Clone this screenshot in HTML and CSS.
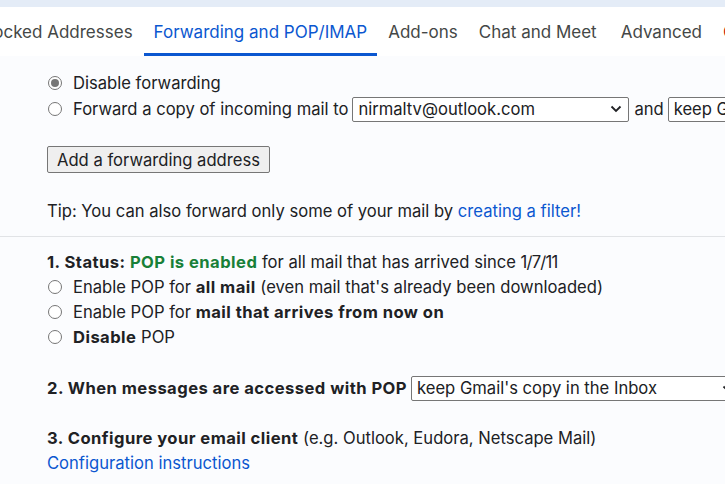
FILE: index.html
```html
<!DOCTYPE html>
<html>
<head>
<meta charset="utf-8">
<link rel="stylesheet" href="styles.css">
</head>
<body>
<div class="topstrip"></div>
<nav class="tabs">
  <span class="tab">Blocked Addresses</span>
  <span class="tab active">Forwarding and POP/IMAP</span>
  <span class="tab">Add-ons</span>
  <span class="tab">Chat and Meet</span>
  <span class="tab adv">Advanced</span>
  <span class="tab offline">Offline</span>
</nav>
<main class="content">
  <section class="forward">
    <label class="row"><span class="radio checked"></span>Disable forwarding</label>
    <label class="row"><span class="radio"></span>Forward a copy of incoming mail to
      <span class="select sel-addr">nirmaltv@outlook.com<svg class="chev" viewBox="0 0 12 8" width="12" height="8"><path d="M1.5 1.5 6 6l4.5-4.5" fill="none" stroke="#202124" stroke-width="1.8"/></svg></span>
      <span class="and">and</span>
      <span class="select sel-keep">keep Gmail's copy in the Inbox</span>
    </label>
    <div class="btnrow"><button class="btn">Add a forwarding address</button></div>
    <p class="tip">Tip: You can also forward only some of your mail by <a class="link">creating a filter!</a></p>
  </section>
  <hr class="sep">
  <section class="pop">
    <div class="line status"><b>1. Status: </b><b class="green">POP is enabled</b> for all mail that has arrived since <span class="date">1/7/11</span></div>
    <label class="row"><span class="radio"></span>Enable POP for&nbsp;<b>all mail</b>&nbsp;(even mail that's already been downloaded)</label>
    <label class="row"><span class="radio"></span>Enable POP for&nbsp;<b>mail that arrives from now on</b></label>
    <label class="row"><span class="radio"></span><b>Disable</b>&nbsp;POP</label>
    <div class="line q2"><b>2. When messages are accessed with POP</b>
      <span class="select sel-pop">keep Gmail's copy in the Inbox<svg class="chev" viewBox="0 0 12 8" width="12" height="8"><path d="M1.5 1.5 6 6l4.5-4.5" fill="none" stroke="#202124" stroke-width="1.8"/></svg></span>
    </div>
    <div class="line q3"><b>3. Configure your email client</b> (e.g. Outlook, Eudora, Netscape Mail)</div>
    <div class="line"><a class="link">Configuration instructions</a></div>
  </section>
</main>
</body>
</html>
```
FILE: styles.css
```css
html, body {
  margin: 0;
  padding: 0;
  overflow: hidden;
  width: 725px;
  height: 484px;
  background: #fbfcfe;
  font-family: Inter, Roboto, "Noto Sans", sans-serif;
  color: #202124;
}
.topstrip {
  height: 7px;
  background: #e4ecf7;
}
.tabs {
  display: flex;
  height: 49px;
  background: #ffffff;
  white-space: nowrap;
  margin-left: -32px;
  font-size: 17px;
  overflow: hidden;
}
.tab {
  padding: 0 10px;
  margin-right: 1px;
  display: flex;
  align-items: center;
  color: #444746;
  border-bottom: 3px solid transparent;
  padding-top: 3px;
}
.tab.adv { padding-left: 13px; }
.tab.active {
  color: #0b57d0;
  border-bottom-color: #0b57d0;
}
.tab.offline { color: #c5221f; }
.content {
  padding-left: 47px;
  font-size: 16.6px;
}
b { letter-spacing: 0.45px; }
.date { letter-spacing: -0.8px; }
.forward { padding-top: 14px; }
.row {
  display: flex;
  align-items: center;
  height: 25px;
  white-space: nowrap;
}
.forward .row { height: 26px; }
.radio {
  width: 14px;
  height: 14px;
  border: 1px solid #767676;
  border-radius: 50%;
  background: #fff;
  margin: 0 11px 0 1px;
  box-sizing: border-box;
  position: relative;
  flex: none;
}
.radio.checked::after {
  content: "";
  position: absolute;
  left: 2px; top: 2px;
  width: 8px; height: 8px;
  border-radius: 50%;
  background: #767676;
}
.select {
  display: inline-flex;
  align-items: center;
  height: 25px;
  box-sizing: border-box;
  border: 1px solid #767676;
  border-radius: 2px;
  background: #fff;
  padding: 0 6px 0 5px;
  margin-left: 4px;
  flex: none;
}
.sel-addr { width: 277px; justify-content: space-between; }
.sel-keep { width: 250px; }
.sel-pop { width: 330px; justify-content: space-between; }
.and { margin-left: 5px; }
.chev { flex: none; }
.btnrow { padding-top: 24px; }
.btn {
  font: inherit;
  color: #202124;
  background: #efefef;
  border: 1px solid #767676;
  border-radius: 2px;
  height: 27px;
  padding: 0 9px;
}
.tip {
  margin: 0;
  padding-top: 26px;
  line-height: 25px;
}
.link { color: #0b57d0; }
.sep {
  margin: 12px 0 0 -47px;
  border: 0;
  border-top: 1px solid #e1e3e6;
}
.pop { padding-top: 13px; }
.line {
  height: 25px;
  line-height: 25px;
  white-space: nowrap;
}
.line.status { height: 24px; }
.green { color: #188038; }
.q2 { margin-top: 27px; display: flex; align-items: center; }
.q3 { margin-top: 25px; }
```
